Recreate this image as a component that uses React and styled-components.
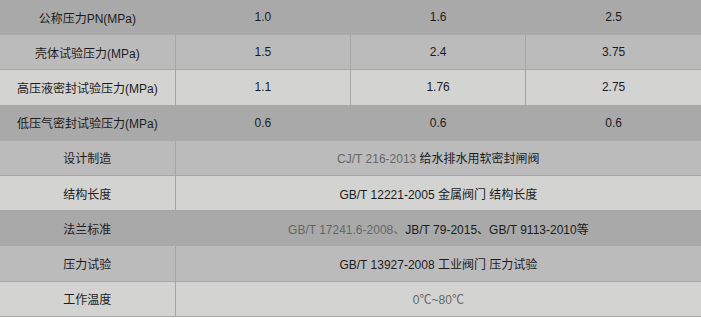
import React from "react";
import styled, { createGlobalStyle } from "styled-components";

const GlobalStyle = createGlobalStyle`
  html, body {
    margin: 0;
    padding: 0;
    background: #fff;
  }
  body {
    font-family: "Liberation Sans", Arial, "Noto Sans CJK SC", sans-serif;
  }
`;

const shades = {
  dark: "#a9a9a9",
  mid: "#bcbbbc",
  light: "#d3d3d1",
};

const Table = styled.table`
  width: 701px;
  border-collapse: collapse;
  table-layout: fixed;
  font-size: 12px;
  color: #1c1c1c;
`;

const Col = styled.col`
  width: 25%;
`;

const Tr = styled.tr`
  background-color: ${(props) => shades[props.shade]};
`;

const Td = styled.td`
  height: 34.2px;
  padding: 0;
  text-align: center;
  vertical-align: middle;
  white-space: nowrap;
  border: 1px solid ${(props) => (props.shade === "dark" ? shades.dark : "#a6a6a6")};
  border-top: 0;
  border-left: 0;
  &:last-child {
    border-right: 0;
  }
`;

const Muted = styled.span`
  color: #666;
`;

const pressureRows = [
  ["公称压力PN(MPa)", "1.0", "1.6", "2.5"],
  ["壳体试验压力(MPa)", "1.5", "2.4", "3.75"],
  ["高压液密封试验压力(MPa)", "1.1", "1.76", "2.75"],
  ["低压气密封试验压力(MPa)", "0.6", "0.6", "0.6"],
];

const specRows = [
  ["设计制造", <><Muted>CJ/T 216-2013</Muted> 给水排水用软密封闸阀</>],
  ["结构长度", "GB/T 12221-2005 金属阀门 结构长度"],
  ["法兰标准", <><Muted>GB/T 17241.6-2008、</Muted>JB/T 79-2015、GB/T 9113-2010等</>],
  ["压力试验", "GB/T 13927-2008 工业阀门 压力试验"],
  ["工作温度", <Muted>0℃~80℃</Muted>],
];

const order = ["dark", "mid", "light"];

const App = () => {
  return (
    <>
      <GlobalStyle />
      <Table>
        <colgroup>
          <Col />
          <Col />
          <Col />
          <Col />
        </colgroup>
        <tbody>
          {pressureRows.map((row, i) => {
            const shade = order[i % 3];
            return (
              <Tr key={i} shade={shade}>
                {row.map((cell, j) => (
                  <Td key={j} shade={shade}>{cell}</Td>
                ))}
              </Tr>
            );
          })}
          {specRows.map((row, i) => {
            const shade = order[(i + pressureRows.length) % 3];
            return (
              <Tr key={"s" + i} shade={shade}>
                <Td shade={shade}>{row[0]}</Td>
                <Td shade={shade} colSpan={3}>{row[1]}</Td>
              </Tr>
            );
          })}
        </tbody>
      </Table>
    </>
  );
};

export default App;
